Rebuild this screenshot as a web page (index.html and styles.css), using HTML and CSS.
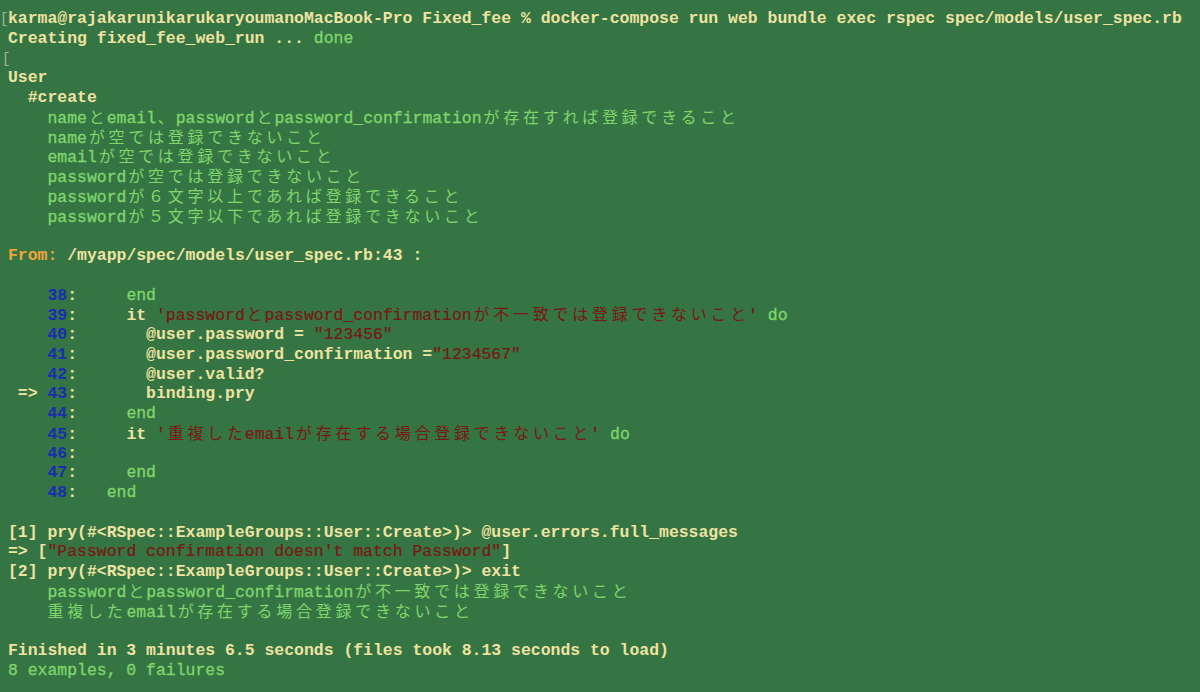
FILE: index.html
```html
<!DOCTYPE html>
<html lang="ja">
<head>
<meta charset="utf-8">
<title>Terminal</title>
<link rel="stylesheet" href="styles.css">
</head>
<body>
<main class="term">
<div class="ln c"><span class="cur">[</span>karma@rajakarunikarukaryoumanoMacBook-Pro Fixed_fee % docker-compose run web bundle exec rspec spec/models/user_spec.rb</div>
<div class="ln c">Creating fixed_fee_web_run ... <span class="g">done</span></div>
<div class="ln"><span class="cur cur2">[</span></div>
<div class="ln c">User</div>
<div class="ln c">  #create</div>
<div class="ln g">    name<span class="j">と</span>email<span class="j">、</span>password<span class="j">と</span>password_confirmation<span class="j">が存在すれば登録できること</span></div>
<div class="ln g">    name<span class="j">が空では登録できないこと</span></div>
<div class="ln g">    email<span class="j">が空では登録できないこと</span></div>
<div class="ln g">    password<span class="j">が空では登録できないこと</span></div>
<div class="ln g">    password<span class="j">が６文字以上であれば登録できること</span></div>
<div class="ln g">    password<span class="j">が５文字以下であれば登録できないこと</span></div>
<div class="ln"></div>
<div class="ln c"><span class="o">From:</span> /myapp/spec/models/user_spec.rb:43 :</div>
<div class="ln"></div>
<div class="ln c">    <span class="b">38</span>:     <span class="g">end</span></div>
<div class="ln c">    <span class="b">39</span>:     it <span class="r">'password<span class="j">と</span>password_confirmation<span class="j">が不一致では登録できないこと</span>'</span> <span class="g">do</span></div>
<div class="ln c">    <span class="b">40</span>:       @user.password = <span class="r">"123456"</span></div>
<div class="ln c">    <span class="b">41</span>:       @user.password_confirmation =<span class="r">"1234567"</span></div>
<div class="ln c">    <span class="b">42</span>:       @user.valid?</div>
<div class="ln c"> =&gt; <span class="b">43</span>:       binding.pry</div>
<div class="ln c">    <span class="b">44</span>:     <span class="g">end</span></div>
<div class="ln c">    <span class="b">45</span>:     it <span class="r">'<span class="j">重複した</span>email<span class="j">が存在する場合登録できないこと</span>'</span> <span class="g">do</span></div>
<div class="ln c">    <span class="b">46</span>:</div>
<div class="ln c">    <span class="b">47</span>:     <span class="g">end</span></div>
<div class="ln c">    <span class="b">48</span>:   <span class="g">end</span></div>
<div class="ln"></div>
<div class="ln c">[1] pry(#&lt;RSpec::ExampleGroups::User::Create&gt;)&gt; @user.errors.full_messages</div>
<div class="ln c">=&gt; [<span class="r">"Password confirmation doesn't match Password"</span>]</div>
<div class="ln c">[2] pry(#&lt;RSpec::ExampleGroups::User::Create&gt;)&gt; exit</div>
<div class="ln g">    password<span class="j">と</span>password_confirmation<span class="j">が不一致では登録できないこと</span></div>
<div class="ln g">    <span class="j jl">重複した</span>email<span class="j">が存在する場合登録できないこと</span></div>
<div class="ln"></div>
<div class="ln c">Finished in 3 minutes 6.5 seconds (files took 8.13 seconds to load)</div>
<div class="ln g">8 examples, 0 failures</div>
</main>
</body>
</html>
```
FILE: styles.css
```css
html, body {
  margin: 0;
  padding: 0;
  background: #357543;
  height: 100%;
  overflow: hidden;
}
.term {
  padding: 9px 0 0 8px;
  font-family: "Liberation Mono", "Courier New", monospace;
  font-size: 16.45px;
}
.ln {
  white-space: pre;
  height: 19.75px;
  line-height: 19.75px;
}
.c {
  color: #efe3a2;
  font-weight: bold;
}
.g {
  color: #80d66c;
  font-weight: normal;
  -webkit-text-stroke: 0.3px #80d66c;
}
.r {
  color: #7a1712;
  font-weight: normal;
  -webkit-text-stroke: 0.2px #7a1712;
}
.b {
  color: #1b2bb3;
  font-weight: bold;
}
.o {
  color: #f4a53c;
  font-weight: bold;
}
.j {
  font-family: "Noto Sans CJK JP", sans-serif;
  font-weight: normal;
  -webkit-text-stroke: 0;
  font-size: 16px;
  line-height: 1;
  letter-spacing: 3.74px;
  padding-left: 1.87px;
  margin-right: -1.87px;
}
.jl {
  padding-left: 0;
  margin-right: 0;
}
.cur {
  display: inline-block;
  width: 8px;
  margin-left: -8px;
  color: #9fb596;
  font-weight: normal;
  -webkit-text-stroke: 0;
  font-size: 14px;
}
.cur2 {
  margin-left: -6px;
}
```
